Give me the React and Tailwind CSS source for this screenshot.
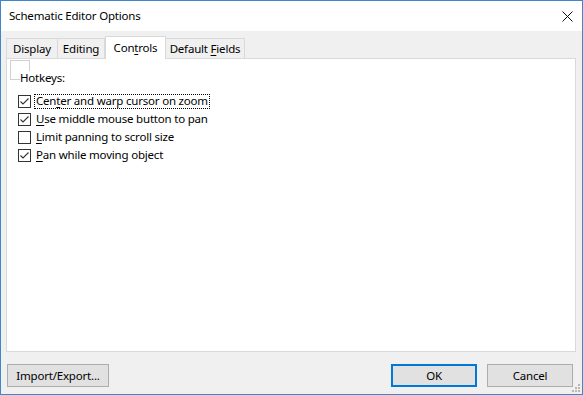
import React from "react";

const font = { fontFamily: '"Noto Sans", "Segoe UI", sans-serif', letterSpacing: "-0.2px" };

function Check({ checked }) {
  return (
    <svg width="13" height="13" viewBox="0 0 13 13" className="shrink-0">
      <rect x="0.5" y="0.5" width="12" height="12" fill="#fff" stroke="#333" />
      {checked && (
        <polyline points="2.5,6.5 5,9 10.5,3.5" fill="none" stroke="#333" strokeWidth="1.1" />
      )}
    </svg>
  );
}

function Row({ checked, pre, u, post, focus }) {
  return (
    <div className="h-[18px] flex items-center ml-[11px]">
      <Check checked={checked} />
      <span
        className={
          "ml-[3px] pl-[1px] pr-[1px] h-[15px] flex items-center border border-dotted " +
          (focus ? "border-black" : "border-transparent")
        }
      >
        {pre}
        <span className="underline underline-offset-2">{u}</span>
        {post}
      </span>
    </div>
  );
}

export default function App() {
  return (
    <div
      className="w-[583px] h-[395px] border border-[#3f86cb] flex flex-col text-[11.5px] text-black bg-[#f0f0f0] relative"
      style={font}
    >
      <div className="h-[30px] bg-white flex items-center justify-between pl-[8px] pr-[9px] shrink-0">
        <span className="leading-[16px]">Schematic Editor Options</span>
        <svg width="11" height="11" viewBox="0 0 11 11">
          <path d="M0.5 0.5 L10.5 10.5 M10.5 0.5 L0.5 10.5" stroke="#111" strokeWidth="1" />
        </svg>
      </div>
      <div className="flex-1 flex flex-col pt-[5px]">
        <div className="flex items-end h-[22px] ml-[5px]">
          <div className="h-[20px] w-[52px] border border-b-0 border-[#d9d9d9] flex items-center justify-center pt-[1px]">
            Display
          </div>
          <div className="h-[20px] w-[47px] border border-l-0 border-b-0 border-[#d9d9d9] flex items-center justify-center pt-[1px]">
            Editing
          </div>
          <div className="h-[23px] w-[61px] -mb-px relative z-10 bg-white border border-b-0 border-[#d9d9d9] flex items-start justify-center pt-[2px]">
            <span>
              Con<span className="underline underline-offset-2">t</span>rols
            </span>
          </div>
          <div className="h-[20px] w-[79px] border border-l-0 border-b-0 border-[#d9d9d9] flex items-center justify-center pt-[1px]">
            <span>
              Default <span className="underline underline-offset-2">F</span>ields
            </span>
          </div>
        </div>
        <div className="ml-[5px] w-[570px] h-[294px] bg-white border border-[#d9d9d9] flex flex-col">
          <div className="ml-[3px] mt-[1px] w-[20px] h-[20px] border border-[#d0d0d0]" />
          <div className="ml-[13px] -mt-[9px] relative bg-white w-fit leading-[12px] pr-[2px] pt-[1px]">
            Hotkeys:
          </div>
          <div className="mt-[8px] flex flex-col">
            <Row checked pre="Cen" u="t" post="er and warp cursor on zoom" focus />
            <Row checked pre="" u="U" post="se middle mouse button to pan" />
            <Row checked={false} pre="" u="L" post="imit panning to scroll size" />
            <Row checked pre="" u="P" post="an while moving object" />
          </div>
        </div>
        <div className="flex items-center mt-[12px] ml-[6px] mr-[9px]">
          <button className="w-[102px] h-[23px] bg-[#e1e1e1] border border-[#adadad] flex items-center justify-center">
            Import/Export...
          </button>
          <div className="flex-1" />
          <button className="w-[86px] h-[23px] bg-[#e1e1e1] border-2 border-[#0078d7] flex items-center justify-center">
            OK
          </button>
          <button className="w-[86px] h-[23px] ml-[10px] bg-[#e1e1e1] border border-[#adadad] flex items-center justify-center">
            Cancel
          </button>
        </div>
      </div>
      <svg width="12" height="12" viewBox="0 0 12 12" className="absolute right-[1px] bottom-[1px]">
        <g fill="#b8b8b8">
          <rect x="9" y="3" width="2" height="2" />
          <rect x="6" y="6" width="2" height="2" />
          <rect x="9" y="6" width="2" height="2" />
          <rect x="3" y="9" width="2" height="2" />
          <rect x="6" y="9" width="2" height="2" />
          <rect x="9" y="9" width="2" height="2" />
        </g>
      </svg>
    </div>
  );
}
